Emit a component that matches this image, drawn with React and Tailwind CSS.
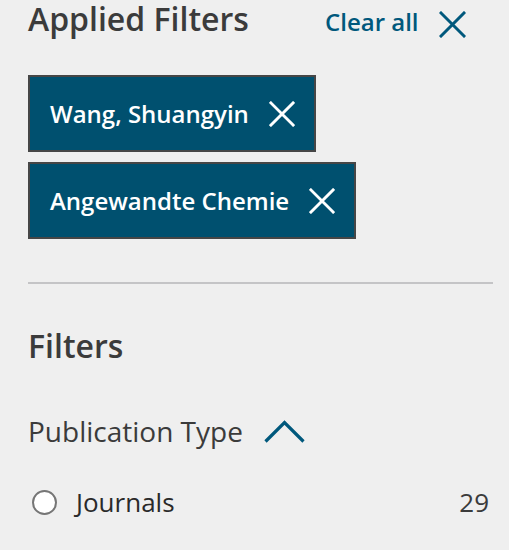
const chips = ['Wang, Shuangyin', 'Angewandte Chemie'];

const CloseIcon = ({ className }) => (
    <svg className={className} viewBox="0 0 27 27" fill="none" stroke="currentColor" strokeWidth={3} strokeLinecap="square">
        <path d="M2 2 25 25M25 2 2 25" />
    </svg>
);

const FilterChip = ({ label }) => (
    <button className="flex items-center gap-5 h-[77px] pl-5 pr-[19px] bg-[#00506f] border-2 border-[#464646] text-white text-[24px] font-semibold">
        <span>{label}</span>
        <CloseIcon className="w-[26px] h-[26px]" />
    </button>
);

export default function App() {
    return (
        <div className="min-h-[550px] w-[509px] bg-[#efefef] pl-[28px] pr-[20px] text-[#3b3b3b] font-['Open_Sans',sans-serif]">
            {/* Applied filters */}
            <div className="flex items-start">
                <h2 className="text-[32px] leading-[38px] font-semibold w-[297px]">Applied Filters</h2>
                <button className="flex items-center gap-5 text-[#00587c] text-[24px] font-semibold mt-[5px] leading-[32px]">
                    Clear all
                    <CloseIcon className="w-[27px] h-[27px] mt-[6px]" />
                </button>
            </div>

            <div className="flex flex-col items-start gap-[10px] mt-[37px]">
                {chips.map((c) => (
                    <FilterChip key={c} label={c} />
                ))}
            </div>

            <hr className="mt-[43px] -mr-[4px] border-0 border-t-2 border-[#c4c4c6]" />

            {/* Filters */}
            <h2 className="mt-[43px] text-[32px] leading-[38px] font-semibold">Filters</h2>

            <div className="mt-[47px] flex items-center gap-[21px]">
                <span className="text-[28px] leading-[38px]">Publication Type</span>
                <svg className="w-[41px] h-[24px] text-[#00587c]" viewBox="0 0 41 24" fill="none" stroke="currentColor" strokeWidth={3.2}>
                    <path d="M1.5 22.5 20.5 3.5 39.5 22.5" />
                </svg>
            </div>

            <label className="mt-[34px] flex items-center">
                <span className="w-[25px] h-[25px] ml-[4px] rounded-full border-2 border-[#767676] bg-white" />
                <span className="ml-[19px] text-[26px] leading-[36px] text-[#2a2a2a]">Journals</span>
                <span className="ml-auto text-[26px] leading-[36px] text-[#3b3b3b]">29</span>
            </label>
        </div>
    );
}
